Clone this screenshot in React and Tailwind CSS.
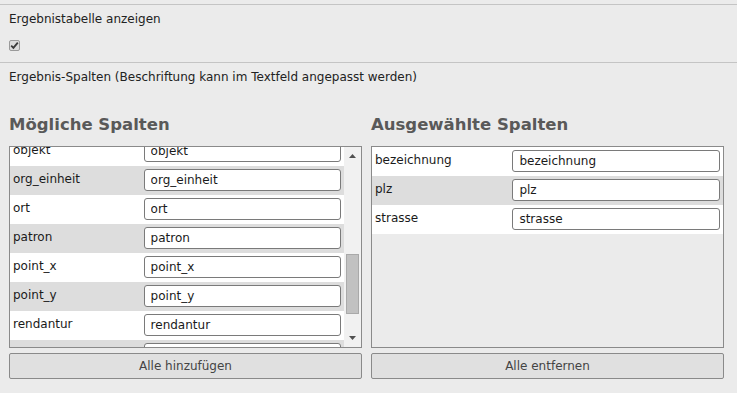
import React from "react";

const leftRows = ["objekt", "org_einheit", "ort", "patron", "point_x", "point_y", "rendantur", "schluessel"];
const rightRows = ["bezeichnung", "plz", "strasse"];

function Row({ name, i }) {
  return (
    <div className={`flex h-[29px] shrink-0 ${i % 2 === 0 ? "bg-white" : "bg-[#dddddd]"}`}>
      <div className="w-[40%] pl-[3px] pt-[5px] leading-[16px] text-[#1a1a1a]">{name}</div>
      <div className="flex-1 pt-[3px] pr-[3px]">
        <input
          readOnly
          value={name}
          className="h-[22px] w-full rounded-[3px] border border-[#7a7a7a] bg-white px-[6px] text-[12px] leading-[16px] text-[#1a1a1a] outline-none"
          style={{ fontFamily: "inherit" }}
        />
      </div>
    </div>
  );
}

export default function App() {
  return (
    <div
      className="h-[393px] w-[737px] overflow-hidden bg-[#ebebeb] text-[12px] leading-[16px] text-[#222]"
      style={{ fontFamily: '"DejaVu Sans", Verdana, sans-serif' }}
    >
      <div className="h-[4px]" />
      <div className="border-t border-[#c4c4c4] px-[9px]">
        <div className="pt-[6px]">Ergebnistabelle anzeigen</div>
        <div className="mt-[13px] mb-[11px] flex h-[11px] w-[11px] items-center justify-center rounded-[2px] border border-[#9a9a9a] bg-[#dcdcdc]">
          <svg width="9" height="9" viewBox="0 0 9 9">
            <path d="M1.2 4.6 L3.4 6.8 L7.8 1.6" fill="none" stroke="#3a3a3a" strokeWidth="1.8" />
          </svg>
        </div>
      </div>
      <div className="border-t border-[#c4c4c4] px-[9px]">
        <div className="pt-[6px]">Ergebnis-Spalten (Beschriftung kann im Textfeld angepasst werden)</div>
        <div className="mt-[29px] flex gap-[9px]">
          <div className="flex w-[353px] flex-col">
            <div className="h-[22px] text-[16.5px] font-bold leading-[22px] text-[#595959]">Mögliche Spalten</div>
            <div className="mt-[10px] flex h-[202px] border border-[#8a8a8a] bg-[#ebebeb]">
              <div className="h-full w-[334px] overflow-hidden">
                <div className="-mt-[10px] flex flex-col">
                  {leftRows.map((r, i) => (
                    <Row key={r} name={r} i={i} />
                  ))}
                </div>
              </div>
              <div className="relative h-full w-[17px] bg-[#f1f1f1]">
                <svg className="absolute left-[5px] top-[7px]" width="7" height="4" viewBox="0 0 7 4">
                  <path d="M0 4 L3.5 0 L7 4 Z" fill="#505050" />
                </svg>
                <div className="absolute left-[2px] top-[107px] h-[60px] w-[13px] border border-[#a9a9a9] bg-[#c1c1c1]" />
                <svg className="absolute left-[5px] bottom-[7px]" width="7" height="4" viewBox="0 0 7 4">
                  <path d="M0 0 L7 0 L3.5 4 Z" fill="#505050" />
                </svg>
              </div>
            </div>
            <div className="mt-[5px] flex h-[26px] items-center justify-center rounded-[2px] border border-[#8a8a8a] bg-[#e0e0e0] text-[#444]">
              Alle hinzufügen
            </div>
          </div>
          <div className="flex w-[353px] flex-col">
            <div className="h-[22px] text-[16.5px] font-bold leading-[22px] text-[#595959]">Ausgewählte Spalten</div>
            <div className="mt-[10px] flex h-[202px] flex-col border border-[#8a8a8a] bg-[#ebebeb]">
              {rightRows.map((r, i) => (
                <Row key={r} name={r} i={i} />
              ))}
            </div>
            <div className="mt-[5px] flex h-[26px] items-center justify-center rounded-[2px] border border-[#8a8a8a] bg-[#e0e0e0] text-[#444]">
              Alle entfernen
            </div>
          </div>
        </div>
      </div>
    </div>
  );
}
